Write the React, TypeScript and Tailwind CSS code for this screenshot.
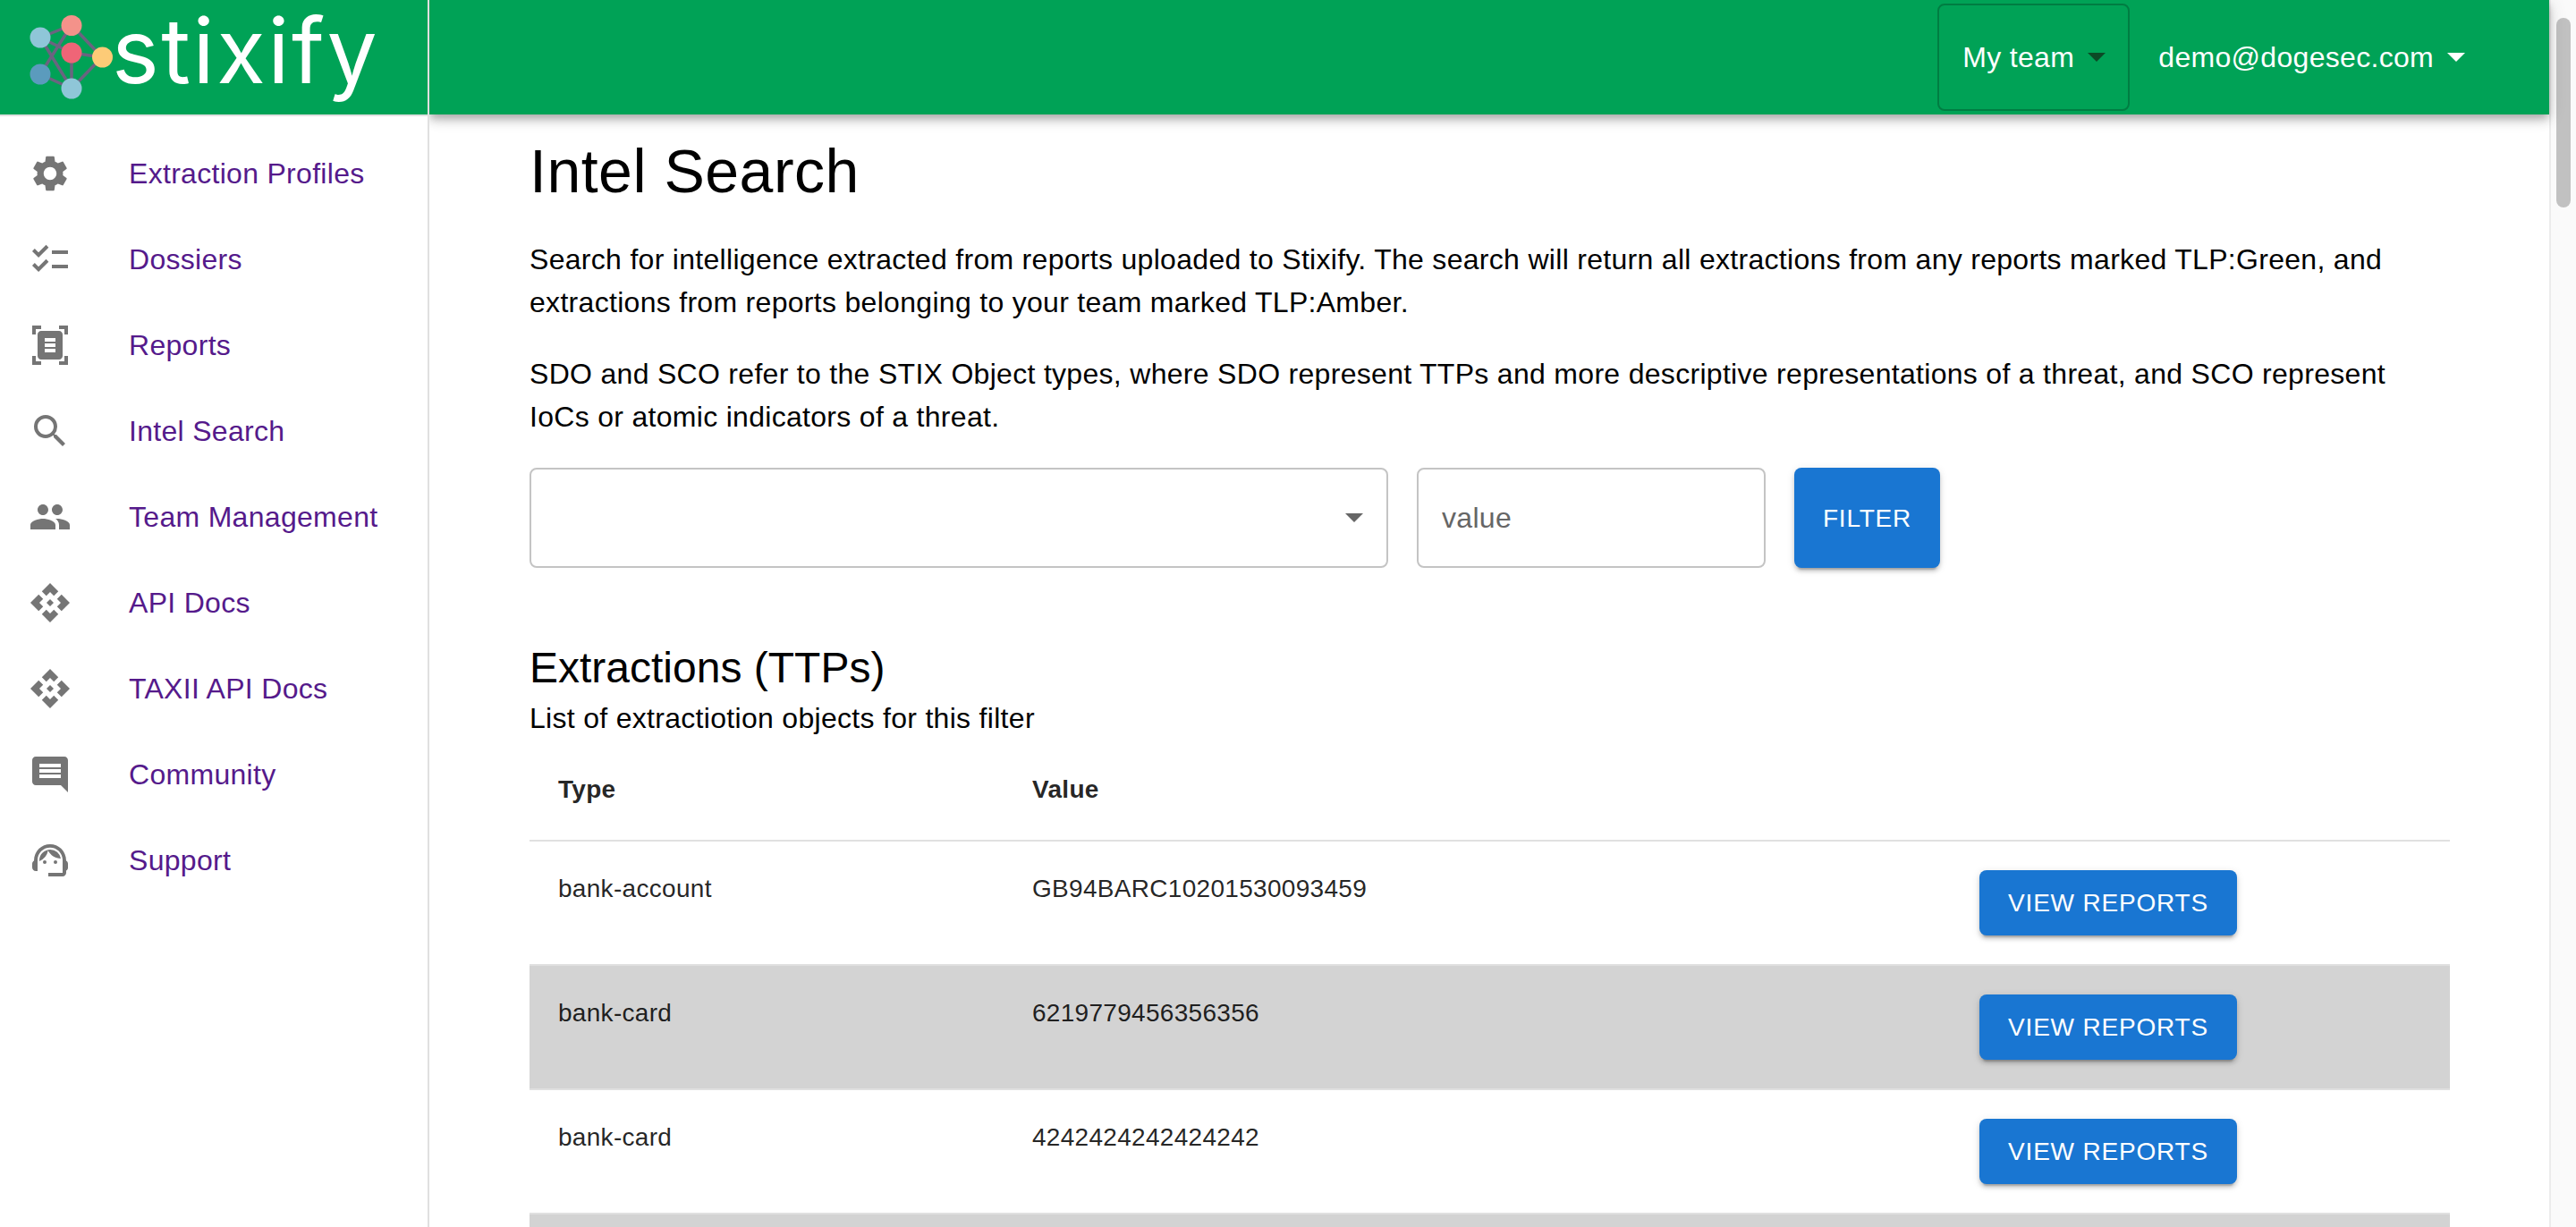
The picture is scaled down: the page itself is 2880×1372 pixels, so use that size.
import React from "react";
import { MdSettings, MdChecklist, MdDocumentScanner, MdSearch, MdPeople, MdApi, MdComment, MdSupportAgent } from "react-icons/md";

const nav = [
  { label: "Extraction Profiles", Icon: MdSettings },
  { label: "Dossiers", Icon: MdChecklist },
  { label: "Reports", Icon: MdDocumentScanner },
  { label: "Intel Search", Icon: MdSearch },
  { label: "Team Management", Icon: MdPeople },
  { label: "API Docs", Icon: MdApi },
  { label: "TAXII API Docs", Icon: MdApi },
  { label: "Community", Icon: MdComment },
  { label: "Support", Icon: MdSupportAgent },
];

const rows = [
  { type: "bank-account", value: "GB94BARC10201530093459", grey: false, action: true },
  { type: "bank-card", value: "6219779456356356", grey: true, action: true },
  { type: "bank-card", value: "4242424242424242", grey: false, action: true },
  { type: "", value: "", grey: true, action: false },
];

function LogoMark() {
  const links = [
    [80, 28, 45, 42], [45, 42, 80, 59], [45, 42, 80, 99], [80, 28, 45, 83], [80, 28, 114, 64],
    [80, 59, 114, 64], [80, 59, 80, 99], [114, 64, 80, 99], [45, 83, 80, 99],
  ];
  return (
    <svg width="128" height="128" viewBox="0 0 128 128" className="shrink-0">
      {links.map((l, i) => (
        <line key={i} x1={l[0]} y1={l[1]} x2={l[2]} y2={l[3]} stroke="#6a6480" strokeWidth="3.5" />
      ))}
      <circle cx="80" cy="28.5" r="11.5" fill="#f4928a" />
      <circle cx="45" cy="42" r="11.5" fill="#8fc6d8" />
      <circle cx="80" cy="59" r="11.5" fill="#ef6577" />
      <circle cx="114.5" cy="64" r="11.5" fill="#fdcb77" />
      <circle cx="45" cy="83" r="11.5" fill="#5b9bbd" />
      <circle cx="80" cy="99" r="11.5" fill="#8fc6d8" />
    </svg>
  );
}

function Caret({ className }: { className: string }) {
  return (
    <svg width="20" height="10" viewBox="0 0 20 10" className={className}>
      <polygon points="0,0 20,0 10,10" fill="currentColor" />
    </svg>
  );
}

function PrimaryButton({ children, className }: { children: React.ReactNode; className: string }) {
  return (
    <button className={"flex items-center justify-center rounded-lg bg-[#1976d2] text-[28px] leading-[49px] tracking-[0.8px] text-white uppercase shadow-[0_6px_2px_-4px_rgba(0,0,0,0.2),0_4px_4px_0_rgba(0,0,0,0.14),0_2px_10px_0_rgba(0,0,0,0.12)] " + className}>
      {children}
    </button>
  );
}

export default function App() {
  return (
    <div className="flex h-[1372px] w-[2880px] overflow-hidden bg-white font-['Liberation_Sans',Arial,sans-serif] text-black">
      <aside className="relative z-20 flex w-[480px] shrink-0 flex-col border-r-2 border-[#e0e0e0] bg-white">
        <div className="flex h-[130px] shrink-0 items-start border-b-2 border-[#e0e0e0] bg-[#00a256]">
          <LogoMark />
          <span className="mt-[2px] ml-[-3px] font-['Inter',sans-serif] text-[100px] leading-[110px] tracking-[2.5px] text-white">stixify</span>
        </div>
        <nav className="flex flex-col py-4">
          {nav.map(({ label, Icon }) => (
            <a key={label} className="flex h-[96px] items-center px-8">
              <span className="w-[112px] shrink-0 text-[#757575]">
                <Icon size={48} />
              </span>
              <span className="text-[32px] leading-[48px] tracking-[0.3px] text-[#551a8b]">{label}</span>
            </a>
          ))}
        </nav>
      </aside>

      <main className="flex min-w-0 flex-1 flex-col">
        <header className="relative z-10 flex h-[128px] shrink-0 items-center justify-end bg-[#00a256] pr-[94px] shadow-[0_4px_8px_-2px_rgba(0,0,0,0.2),0_8px_10px_0_rgba(0,0,0,0.14),0_2px_20px_0_rgba(0,0,0,0.12)]">
          <button className="flex h-[120px] w-[215px] items-center rounded-lg border-2 border-[#007d42] pl-[26px] text-[32px] tracking-[0.3px] text-white">
            My team
            <Caret className="ml-[15px] text-[#0c4a26]" />
          </button>
          <button className="ml-[32px] flex items-center text-[32px] tracking-[0.3px] text-white">
            demo@dogesec.com
            <Caret className="ml-[15px] text-white" />
          </button>
        </header>

        <div className="flex flex-col px-[112px] pt-[21px]">
          <h1 className="text-[68px] leading-[84px] tracking-[0.5px]">Intel Search</h1>
          <p className="mt-[33px] text-[32px] leading-[48px] tracking-[0.3px]">
            Search for intelligence extracted from reports uploaded to Stixify. The search will return all extractions from any reports marked TLP:Green, and extractions from reports belonging to your team marked TLP:Amber.
          </p>
          <p className="mt-[32px] text-[32px] leading-[48px] tracking-[0.3px]">
            SDO and SCO refer to the STIX Object types, where SDO represent TTPs and more descriptive representations of a threat, and SCO represent IoCs or atomic indicators of a threat.
          </p>

          <div className="mt-[33px] flex h-[112px] items-stretch gap-8">
            <div className="flex w-[960px] items-center justify-end rounded-lg border-2 border-[#c4c4c4] pr-[26px] text-[#666666]">
              <Caret className="" />
            </div>
            <input
              readOnly
              placeholder="value"
              className="w-[390px] rounded-lg border-2 border-[#c4c4c4] px-[26px] text-[32px] tracking-[0.3px] outline-none placeholder:text-[#666666]"
            />
            <PrimaryButton className="w-[163px]">Filter</PrimaryButton>
          </div>

          <h2 className="mt-[80px] text-[48px] leading-[64px]">Extractions (TTPs)</h2>
          <p className="text-[32px] leading-[48px] tracking-[0.3px]">List of extractiotion objects for this filter</p>

          <table className="w-[2147px] table-fixed border-separate border-spacing-0 text-[28px] text-black/87">
            <colgroup>
              <col className="w-[530px]" />
              <col className="w-[1059px]" />
              <col />
            </colgroup>
            <thead>
              <tr>
                <th className="border-b-2 border-[#e0e0e0] p-8 text-left leading-[48px] font-bold tracking-[0.3px]">Type</th>
                <th className="border-b-2 border-[#e0e0e0] p-8 text-left leading-[48px] font-bold tracking-[0.3px]">Value</th>
                <th className="border-b-2 border-[#e0e0e0] p-8" />
              </tr>
            </thead>
            <tbody>
              {rows.map((r, i) => (
                <tr key={i} className={r.grey ? "bg-[#d3d3d3]" : "bg-white"}>
                  <td className="border-b-2 border-[#e0e0e0] p-8 align-top leading-[42px] tracking-[0.3px]">{r.type}</td>
                  <td className="border-b-2 border-[#e0e0e0] p-8 align-top leading-[42px] tracking-[0.3px]">{r.value}</td>
                  <td className="border-b-2 border-[#e0e0e0] p-8 align-top">
                    {r.action && <PrimaryButton className="h-[73px] w-[288px]">View Reports</PrimaryButton>}
                  </td>
                </tr>
              ))}
            </tbody>
          </table>
        </div>
      </main>

      <div className="w-[30px] shrink-0 border-l-2 border-[#ececec] bg-[#fafafa] pt-[20px] pl-[6px]">
        <div className="h-[212px] w-[16px] rounded-full bg-[#c1c1c1]" />
      </div>
    </div>
  );
}
